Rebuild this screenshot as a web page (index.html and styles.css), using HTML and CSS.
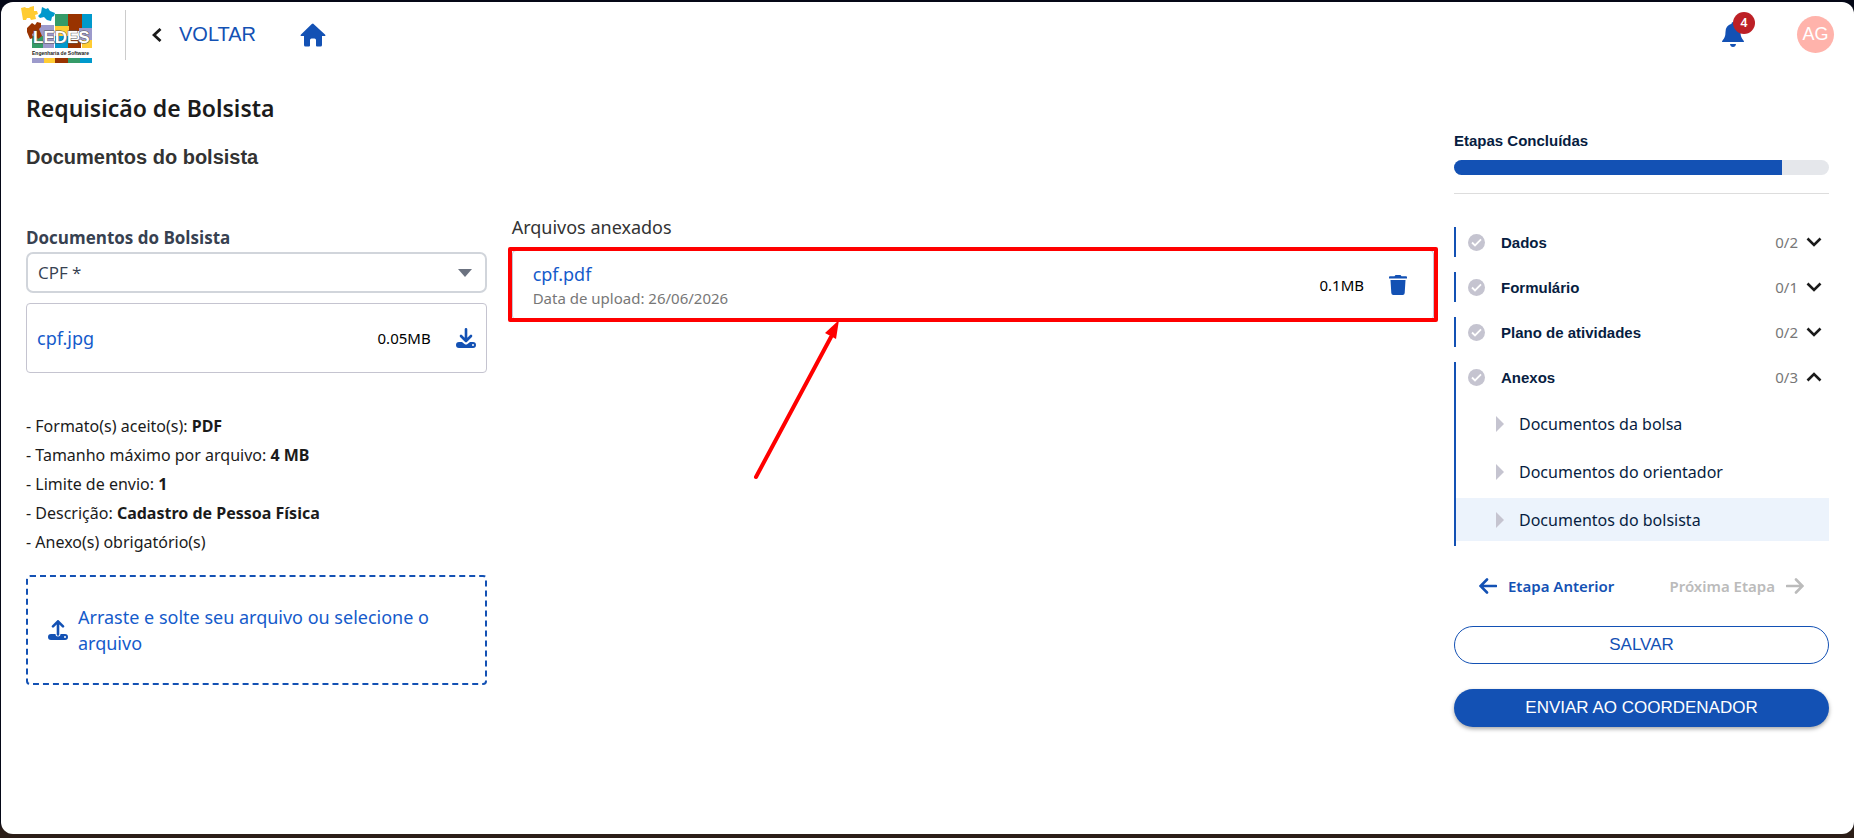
FILE: index.html
```
<!DOCTYPE html>
<html lang="pt-BR">
<head>
  <meta charset="UTF-8">
  <meta name="viewport" content="width=device-width, initial-scale=1.0">
  <title>Requisicão de Bolsista</title>
  <link rel="stylesheet" href="styles.css">
</head>
<body>
  <div class="app">
    <header class="topbar">
      <a href="#" class="logo" aria-label="LEDES">
        <svg width="72" height="58" viewBox="0 0 72 58">
          <!-- colored puzzle background -->
          <path fill="#9c9acb" d="M11 19h22v23H11z"/>
          <path fill="#359b68" d="M34 8h14v34H34zM11 30h11v12H11z"/>
          <path fill="#993300" d="M47 8h14v17H47z"/>
          <path fill="#0099cc" d="M61 8h10v17H61zM34 30h14v12H34z"/>
          <path fill="#ffcc33" d="M34 20h14v10H34zM61 30h10v12H61z"/>
          <path fill="#9c9acb" d="M58 22h13v12H58z"/>
          <path fill="#993300" d="M47 34h13v8H47z"/>
          <!-- loose pieces -->
          <path fill="#ffcc33" d="M0 2l4-1 1 1 3 0 1-1 4-1 0 5 3 0 1 3-3 1 1 4-5 1-1-2-3 0-1 2-3 0z"/>
          <path fill="#0099cc" d="M21 1l4 2 2-1 2 3 5 2-1 3-2 1-1 4-4-1-3-3-4 1-2-2 3-3z"/>
          <path fill="#993300" d="M6 22l5-5 3 2 2-3 4 1 0 4-2 2 3 7-4 3-4-6-2 1 1 4-3 1-3-7z"/>
          <text class="logo-name" x="12" y="37">LEDES</text>
          <path fill="#fff" d="M10 42h62v9H10z"/>
          <text class="logo-sub" x="11" y="49">Engenharia de Software</text>
          <path fill="#9c9acb" d="M11 52h12v5H11z"/>
          <path fill="#ffcc33" d="M23 52h11v5H23z"/>
          <path fill="#993300" d="M34 52h13v5H34z"/>
          <path fill="#359b68" d="M47 52h12v5H47z"/>
          <path fill="#0099cc" d="M59 52h12v5H59z"/>
        </svg>
      </a>
      <div class="divider"></div>
      <a href="#" class="back">
        <svg width="10" height="14" viewBox="0 0 10 14"><path d="M8.500 1L2 7l6.500 6" fill="none" stroke="#1b1b1b" stroke-width="2.800"/></svg>
        VOLTAR
      </a>
      <a href="#" class="home" aria-label="Início">
        <svg width="26" height="24" viewBox="0 0 26 24"><path fill="#1351b4" d="M13 0.500L25 11.500q.8.800.2 1.500H22v9q0 1.500-1.500 1.500H17q-1 0-1-1V17q0-1.500-1.500-1.500h-3Q10 15.500 10 17v5.500q0 1-1 1H5.500Q4 23.500 4 22v-9H.8q-.6-.7.2-1.500L11.800 1Q13 0 14.200 1z"/></svg>
      </a>
      <div class="user-area">
        <button type="button" class="bell" aria-label="Notificações">
          <svg width="22" height="25" viewBox="0 0 22 25"><path fill="#1351b4" d="M11 0q1.500 0 1.500 1.800Q18.500 3.500 18.500 10q0 5.500 3 8.500.5.600.5 1.500H0q0-.9.500-1.500 3-3 3-8.500 0-6.500 6-8.200Q9.500 0 11 0zM8 22h6q-.4 3-3 3t-3-3z"/></svg>
          <span class="badge">4</span>
        </button>
        <button type="button" class="avatar">AG</button>
      </div>
    </header>

    <main class="content">
      <h1>Requisicão de Bolsista</h1>
      <h2>Documentos do bolsista</h2>

      <div class="columns">
        <section class="upload">
          <label for="doc-type">Documentos do Bolsista</label>
          <div class="select-wrap">
            <select id="doc-type">
              <option>CPF *</option>
            </select>
          </div>
          <div class="file-card">
            <a href="#" class="file-name">cpf.jpg</a>
            <span class="file-size">0.05MB</span>
            <button type="button" class="icon-btn" aria-label="Baixar">
              <svg width="20" height="20" viewBox="0 0 20 20"><path d="M10 1.300v11M5 8l5 5 5-5" fill="none" stroke="#1351b4" stroke-width="2.600" stroke-linecap="round" stroke-linejoin="round"/><path fill="#1351b4" d="M3 14h3l2.500 2q1.500 1 3 0l2.500-2h3q3 0 3 3t-3 3H3q-3 0-3-3t3-3z"/><circle cx="17" cy="17" r="1" fill="#fff"/></svg>
            </button>
          </div>

          <ul class="rules">
            <li>- Formato(s) aceito(s): <strong>PDF</strong></li>
            <li>- Tamanho máximo por arquivo: <strong>4 MB</strong></li>
            <li>- Limite de envio: <strong>1</strong></li>
            <li>- Descrição: <strong>Cadastro de Pessoa Física</strong></li>
            <li>- Anexo(s) obrigatório(s)</li>
          </ul>

          <button type="button" class="dropzone">
            <svg width="20" height="20" viewBox="0 0 20 20"><path d="M10 14.500V2M5 6.300l5-5 5 5" fill="none" stroke="#1351b4" stroke-width="2.600" stroke-linecap="round" stroke-linejoin="round"/><path fill="#1351b4" d="M3 14h4.500q0 2.500 2.500 2.500t2.500-2.500H17q3 0 3 3t-3 3H3q-3 0-3-3t3-3z"/><circle cx="17" cy="17" r="1" fill="#fff"/></svg>
            <span>Arraste e solte seu arquivo ou selecione o arquivo</span>
          </button>
        </section>

        <section class="attached">
          <h3>Arquivos anexados</h3>
          <div class="file-card attached-card">
            <div class="file-info">
              <a href="#" class="file-name">cpf.pdf</a>
              <span class="file-date">Data de upload: 26/06/2026</span>
            </div>
            <span class="file-size">0.1MB</span>
            <button type="button" class="icon-btn" aria-label="Excluir">
              <svg width="18" height="20" viewBox="0 0 18 20"><path fill="#1351b4" d="M0 2q0-.8 1-.8h4.500L6.500 0h5l1 1.200H17q1 0 1 .8v1.500H0zM1.500 5h15l-.8 13q-.2 2-2 2H4.300q-1.800 0-2-2z"/></svg>
            </button>
            <div class="highlight"></div>
            <svg class="arrow" width="90" height="162" viewBox="0 0 90 162"><path d="M4 158L79 18" stroke="#f00" stroke-width="4" stroke-linecap="round"/><path fill="#f00" d="M87 1L84 20 73 14z"/></svg>
          </div>
        </section>

        <aside class="steps">
          <label for="progress" class="steps-title">Etapas Concluídas</label>
          <progress id="progress" max="8" value="7"></progress>
          <hr>
          <div class="step">
            <button type="button" class="step-head">
              <svg class="check" width="17" height="17" viewBox="0 0 17 17"><circle cx="8.500" cy="8.500" r="8.500" fill="#c5c4d0"/><path d="M4 8.500l3 3 6-6.200" fill="none" stroke="#fff" stroke-width="1.800"/></svg>
              <span class="step-name">Dados</span>
              <span class="count">0/2</span>
              <svg width="16" height="10" viewBox="0 0 16 10"><path d="M1.500 1.500L8 8l6.500-6.500" fill="none" stroke="#1b1b1b" stroke-width="2.600"/></svg>
            </button>
          </div>
          <div class="step">
            <button type="button" class="step-head">
              <svg class="check" width="17" height="17" viewBox="0 0 17 17"><circle cx="8.500" cy="8.500" r="8.500" fill="#c5c4d0"/><path d="M4 8.500l3 3 6-6.200" fill="none" stroke="#fff" stroke-width="1.800"/></svg>
              <span class="step-name">Formulário</span>
              <span class="count">0/1</span>
              <svg width="16" height="10" viewBox="0 0 16 10"><path d="M1.500 1.500L8 8l6.500-6.500" fill="none" stroke="#1b1b1b" stroke-width="2.600"/></svg>
            </button>
          </div>
          <div class="step">
            <button type="button" class="step-head">
              <svg class="check" width="17" height="17" viewBox="0 0 17 17"><circle cx="8.500" cy="8.500" r="8.500" fill="#c5c4d0"/><path d="M4 8.500l3 3 6-6.200" fill="none" stroke="#fff" stroke-width="1.800"/></svg>
              <span class="step-name">Plano de atividades</span>
              <span class="count">0/2</span>
              <svg width="16" height="10" viewBox="0 0 16 10"><path d="M1.500 1.500L8 8l6.500-6.500" fill="none" stroke="#1b1b1b" stroke-width="2.600"/></svg>
            </button>
          </div>
          <div class="step open">
            <button type="button" class="step-head">
              <svg class="check" width="17" height="17" viewBox="0 0 17 17"><circle cx="8.500" cy="8.500" r="8.500" fill="#c5c4d0"/><path d="M4 8.500l3 3 6-6.200" fill="none" stroke="#fff" stroke-width="1.800"/></svg>
              <span class="step-name">Anexos</span>
              <span class="count">0/3</span>
              <svg width="16" height="10" viewBox="0 0 16 10"><path d="M1.500 8.500L8 2l6.500 6.500" fill="none" stroke="#1b1b1b" stroke-width="2.600"/></svg>
            </button>
            <nav class="substeps">
              <a href="#"><span class="caret"></span>Documentos da bolsa</a>
              <a href="#"><span class="caret"></span>Documentos do orientador</a>
              <a href="#" class="active"><span class="caret"></span>Documentos do bolsista</a>
            </nav>
          </div>

          <div class="step-nav">
            <button type="button">
              <svg width="18" height="16" viewBox="0 0 18 16"><path d="M17 8H2M8 1.500L1.500 8 8 14.500" fill="none" stroke="currentColor" stroke-width="2.600" stroke-linecap="round"/></svg>
              Etapa Anterior
            </button>
            <button type="button" disabled>
              Próxima Etapa
              <svg width="18" height="16" viewBox="0 0 18 16"><path d="M1 8h15M10 1.500L16.500 8 10 14.500" fill="none" stroke="currentColor" stroke-width="2.600" stroke-linecap="round"/></svg>
            </button>
          </div>
          <button type="button" class="btn btn-outline">SALVAR</button>
          <button type="button" class="btn btn-primary">ENVIAR AO COORDENADOR</button>
        </aside>
      </div>
    </main>
  </div>
</body>
</html>
```
FILE: styles.css
```
* {
  box-sizing: border-box;
}
body {
  margin: 0;
  padding: 2px 0 4px 1px;
  min-height: 100vh;
  display: flex;
  background: linear-gradient(#050817 98%, #2b1d17 99%);
  font-family: "Noto Sans", sans-serif;
  color: #1b1b1b;
}
button {
  font-family: inherit;
  background: none;
  border: none;
  padding: 0;
  cursor: pointer;
}
a {
  text-decoration: none;
}
svg {
  display: block;
  flex: none;
}
.app {
  flex: 1;
  background: #fff;
  border-radius: 12px;
}

/* Top bar */
.topbar {
  display: flex;
  align-items: center;
  height: 65px;
  padding: 0 20px;
}
.logo-name {
  font: bold 17px "Liberation Sans", sans-serif;
  fill: #fff;
  stroke: #555;
  stroke-width: 1px;
  paint-order: stroke;
}
.logo-sub {
  font: bold 5px "Liberation Sans", sans-serif;
  fill: #1b1b1b;
}
.divider {
  width: 1px;
  height: 50px;
  margin: 0 26px 0 32px;
  background: #ccc;
}
.back {
  display: flex;
  align-items: center;
  gap: 17px;
  font: 20px "Liberation Sans", sans-serif;
  color: #1351b4;
}
.home {
  margin-left: 44px;
}
.user-area {
  display: flex;
  align-items: center;
  gap: 53px;
  margin-left: auto;
}
.bell {
  position: relative;
}
.badge {
  position: absolute;
  top: -10px;
  right: -11px;
  width: 22px;
  height: 22px;
  border-radius: 50%;
  background: #bd2026;
  color: #fff;
  font: 500 13px/22px Roboto, sans-serif;
}
.avatar {
  width: 37px;
  height: 37px;
  border-radius: 50%;
  background: #ffb3ab;
  color: #fff;
  font: 18px "Liberation Sans", sans-serif;
}

/* Content */
.content {
  padding: 23px 25px 24px;
}
h1 {
  margin: 0;
  font-size: 23px;
  line-height: 36px;
  font-weight: 600;
}
h2 {
  margin: 17px 0 0;
  font: bold 20px/28px "Liberation Sans", sans-serif;
  color: #333;
}
.columns {
  display: grid;
  grid-template-columns: 1fr 2fr 375px;
  column-gap: 20px;
  align-items: start;
}
.upload {
  display: flex;
  flex-direction: column;
  padding: 54px 2px 0 0;
}
.upload label {
  font: bold 17px/26px "Open Sans", sans-serif;
  color: #374151;
}
.select-wrap {
  position: relative;
  margin: 1px 0 10px;
}
.select-wrap::after {
  content: "";
  position: absolute;
  right: 15px;
  top: 17px;
  border: 7px solid transparent;
  border-top: 8px solid #6b7280;
  border-bottom: none;
  pointer-events: none;
}
select {
  appearance: none;
  width: 100%;
  height: 41px;
  padding: 0 10px;
  border: 2px solid #d1d5db;
  border-radius: 7px;
  background: #fff;
  color: #374151;
  font: 17px "Open Sans", sans-serif;
}
.file-card {
  display: flex;
  align-items: center;
  height: 70px;
  padding: 0 10px;
  border: 1px solid #c5c4d0;
  border-radius: 4px;
}
.file-name {
  margin-right: auto;
  font-size: 18px;
  line-height: 26px;
  color: #155bcb;
}
.file-size {
  font-size: 15px;
  color: #000;
}
.icon-btn {
  margin-left: 25px;
}
.rules {
  list-style: none;
  margin: 39px 0 18px;
  padding: 0;
  font-size: 16px;
  line-height: 29px;
}
.dropzone {
  display: flex;
  align-items: center;
  gap: 10px;
  height: 110px;
  padding: 0 20px;
  border: 2px dashed #1351b4;
  border-radius: 4px;
  font-size: 18px;
  line-height: 26px;
  text-align: left;
  color: #155bcb;
}

/* Attached files */
.attached {
  padding: 43px 0 0 3px;
}
h3 {
  margin: 0 0 10px;
  font-size: 18px;
  line-height: 26px;
  font-weight: 400;
  color: #333;
}
.attached-card {
  position: relative;
  padding: 0 26px 0 20px;
}
.file-info {
  display: flex;
  flex-direction: column;
  margin-right: auto;
}
.file-date {
  font-size: 15px;
  line-height: 22px;
  color: #777;
}
.highlight {
  position: absolute;
  inset: -4px -5px -3px;
  border: 4px solid #f00;
  border-radius: 2px;
}
.arrow {
  position: absolute;
  top: 68px;
  left: 26%;
}

/* Steps sidebar */
.steps {
  display: flex;
  flex-direction: column;
  margin-top: -40px;
}
.steps-title {
  font: bold 15px/20px "Liberation Sans", sans-serif;
  color: #071d41;
}
progress {
  appearance: none;
  width: 100%;
  height: 15px;
  margin-top: 9px;
  border: none;
  border-radius: 8px;
  overflow: hidden;
}
progress::-webkit-progress-bar {
  background: #e5e7eb;
}
progress::-webkit-progress-value {
  background: #1351b4;
}
hr {
  width: 100%;
  margin: 18px 0 33px;
  border: none;
  border-top: 1px solid #ddd;
}
.step {
  margin-bottom: 15px;
  border-left: 2px solid #1351b4;
}
.step.open {
  padding-bottom: 5px;
}
.step-head {
  display: flex;
  align-items: center;
  width: 100%;
  height: 30px;
  padding: 0 7px 0 12px;
}
.step-name {
  margin: 0 auto 0 16px;
  font: bold 15px "Liberation Sans", sans-serif;
  color: #071d41;
}
.count {
  margin-right: 8px;
  font-size: 15px;
  color: #777;
}
.substeps {
  display: flex;
  flex-direction: column;
  gap: 5px;
  padding-top: 10px;
}
.substeps a {
  display: flex;
  align-items: center;
  gap: 15px;
  height: 43px;
  padding-left: 40px;
  font-size: 16px;
  color: #071d41;
}
.substeps .active {
  background: #ecf3fc;
}
.caret {
  border: 8px solid transparent;
  border-left-color: #c5c4d0;
  border-right: none;
}
.step-nav {
  display: flex;
  justify-content: space-between;
  padding: 13px 25px 28px;
}
.step-nav button {
  display: flex;
  align-items: center;
  gap: 11px;
  font-size: 15px;
  line-height: 24px;
  font-weight: 600;
  color: #1351b4;
}
.step-nav button:disabled {
  color: #bbb;
}
.btn {
  height: 38px;
  border-radius: 19px;
  font: 17px "Liberation Sans", sans-serif;
}
.btn-outline {
  border: 1px solid #1351b4;
  color: #1351b4;
}
.btn-primary {
  margin-top: 25px;
  background: #1351b4;
  color: #fff;
  box-shadow: 0 2px 4px rgba(0, 0, 0, 0.35);
}
```
